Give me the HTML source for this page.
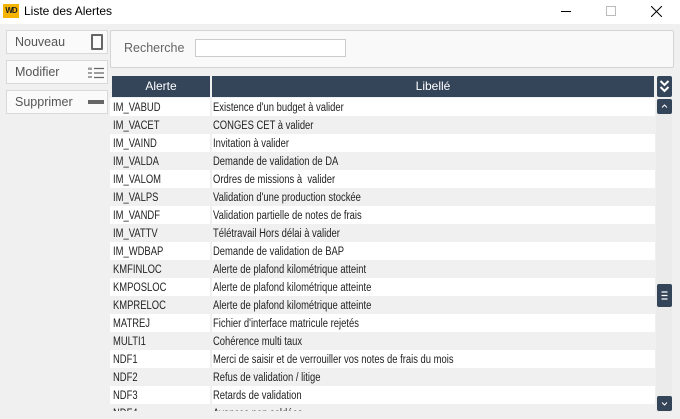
<!DOCTYPE html><html><head><style>
*{margin:0;padding:0;box-sizing:border-box}
body{width:680px;height:419px;background:#f0f0f0;font-family:"Liberation Sans",sans-serif;font-size:11.5px;color:#222;position:relative;overflow:hidden}
.tb{position:absolute;left:0;top:0;width:680px;height:24px;background:#fff}
.logo{position:absolute;left:3px;top:4px;width:16px;height:14px;background:#f5b400;font-size:8px;font-weight:bold;color:#222;line-height:14px;text-align:center;letter-spacing:-1px}
.title{position:absolute;left:24px;top:4px;font-size:12px;color:#000}
.btn{position:absolute;left:6px;width:102px;height:24px;background:#fafafa;border:1px solid #d9d9d9;color:#555;font-size:12.5px;padding:4px 0 0 8px}
.panel{position:absolute;left:110px;top:30px;width:564px;height:38px;background:#f9f9f9;border:1px solid #d4d4d4;border-radius:2px}
.panel span{position:absolute;left:13px;top:10px;color:#666;font-size:12.5px}
.inp{position:absolute;left:84px;top:8px;width:151px;height:18px;background:#fff;border:1px solid #ccc}
.hd{position:absolute;top:76px;height:21px;background:#344459;color:#fff;text-align:center;line-height:21px;font-size:12px}
.row{position:absolute;left:110px;width:545px;height:18px;line-height:20px}
.row.g{background:#f0f0f0}.row.w{background:#fff}
.row b,.row i{font-weight:normal;font-style:normal;position:absolute;transform:scaleX(0.82);transform-origin:0 0;white-space:nowrap}
.row b{left:3px}
.row i{left:103px}
.row:after{content:"";position:absolute;left:100px;top:0;width:2px;height:18px;background:#f0f0f0}
.sb{position:absolute;left:656px;top:98px;width:16px;height:314px;background:#ebebeb}
.sq{position:absolute;left:657px;width:15px;height:15px;background:#344459;border-radius:2px}
</style></head><body>
<div class="tb"><div class="logo">WD</div><div class="title">Liste des Alertes</div>
<div style="position:absolute;left:561px;top:11px;width:10px;height:1px;background:#000"></div>
<div style="position:absolute;left:606px;top:6px;width:10px;height:10px;border:1px solid #bbb"></div>
<svg style="position:absolute;left:651px;top:6px" width="11" height="11"><path d="M0 0L11 11M11 0L0 11" stroke="#000" stroke-width="1"/></svg></div>
<div class="btn" style="top:30px">Nouveau<div style="position:absolute;right:4px;top:3px;width:12px;height:16px;border:2px solid #666;border-radius:1px"></div></div>
<div class="btn" style="top:60px">Modifier<svg style="position:absolute;right:3px;top:6px" width="16" height="12"><path d="M6 1.5H16M6 6H16M6 10.5H16M1 0.5V3M3 0.5V3M1 5V7M3 5V7M1 9V11M3 9V11" stroke="#666" stroke-width="1.2"/></svg></div>
<div class="btn" style="top:90px">Supprimer<div style="position:absolute;right:3px;top:9px;width:16px;height:4px;background:#666"></div></div>
<div class="panel"><span>Recherche</span><div class="inp"></div></div>
<div class="hd" style="left:112px;width:98px">Alerte</div>
<div class="hd" style="left:212px;width:442px">Libellé</div>
<div class="sq" style="top:76px;height:21px"><svg width="15" height="21"><path d="M3.5 5L7.5 9L11.5 5M3.5 11L7.5 15L11.5 11" stroke="#fff" stroke-width="2" fill="none"/></svg></div>
<div class="sb"></div>
<div class="sq" style="top:99px"><svg width="15" height="15"><path d="M5 8.5L7.5 6L10 8.5" stroke="#fff" stroke-width="1" fill="none"/></svg></div>
<div class="sq" style="top:284px;height:23px"><svg width="15" height="23"><path d="M4.5 8H10.5M4.5 11.5H10.5M4.5 15H10.5" stroke="#fff" stroke-width="1.2"/></svg></div>
<div class="sq" style="top:396px"><svg width="15" height="15"><path d="M5 6.5L7.5 9L10 6.5" stroke="#fff" stroke-width="1" fill="none"/></svg></div>
<div style="position:absolute;left:110px;top:98px;width:545px;height:313px;overflow:hidden">
<div class="row w" style="top:0;left:0"><b>IM_VABUD</b><i>Existence d'un budget à valider</i></div>
<div class="row g" style="top:18px;left:0"><b>IM_VACET</b><i>CONGES CET à valider</i></div>
<div class="row w" style="top:36px;left:0"><b>IM_VAIND</b><i>Invitation à valider</i></div>
<div class="row g" style="top:54px;left:0"><b>IM_VALDA</b><i>Demande de validation de DA</i></div>
<div class="row w" style="top:72px;left:0"><b>IM_VALOM</b><i>Ordres de missions à &nbsp;valider</i></div>
<div class="row g" style="top:90px;left:0"><b>IM_VALPS</b><i>Validation d'une production stockée</i></div>
<div class="row w" style="top:108px;left:0"><b>IM_VANDF</b><i>Validation partielle de notes de frais</i></div>
<div class="row g" style="top:126px;left:0"><b>IM_VATTV</b><i>Télétravail Hors délai à valider</i></div>
<div class="row w" style="top:144px;left:0"><b>IM_WDBAP</b><i>Demande de validation de BAP</i></div>
<div class="row g" style="top:162px;left:0"><b>KMFINLOC</b><i>Alerte de plafond kilométrique atteint</i></div>
<div class="row w" style="top:180px;left:0"><b>KMPOSLOC</b><i>Alerte de plafond kilométrique atteinte</i></div>
<div class="row g" style="top:198px;left:0"><b>KMPRELOC</b><i>Alerte de plafond kilométrique atteinte</i></div>
<div class="row w" style="top:216px;left:0"><b>MATREJ</b><i>Fichier d'interface matricule rejetés</i></div>
<div class="row g" style="top:234px;left:0"><b>MULTI1</b><i>Cohérence multi taux</i></div>
<div class="row w" style="top:252px;left:0"><b>NDF1</b><i>Merci de saisir et de verrouiller vos notes de frais du mois</i></div>
<div class="row g" style="top:270px;left:0"><b>NDF2</b><i>Refus de validation / litige</i></div>
<div class="row w" style="top:288px;left:0"><b>NDF3</b><i>Retards de validation</i></div>
<div class="row g" style="top:306px;left:0"><b>NDF4</b><i>Avances non soldées</i></div>
</div>
</body></html>
